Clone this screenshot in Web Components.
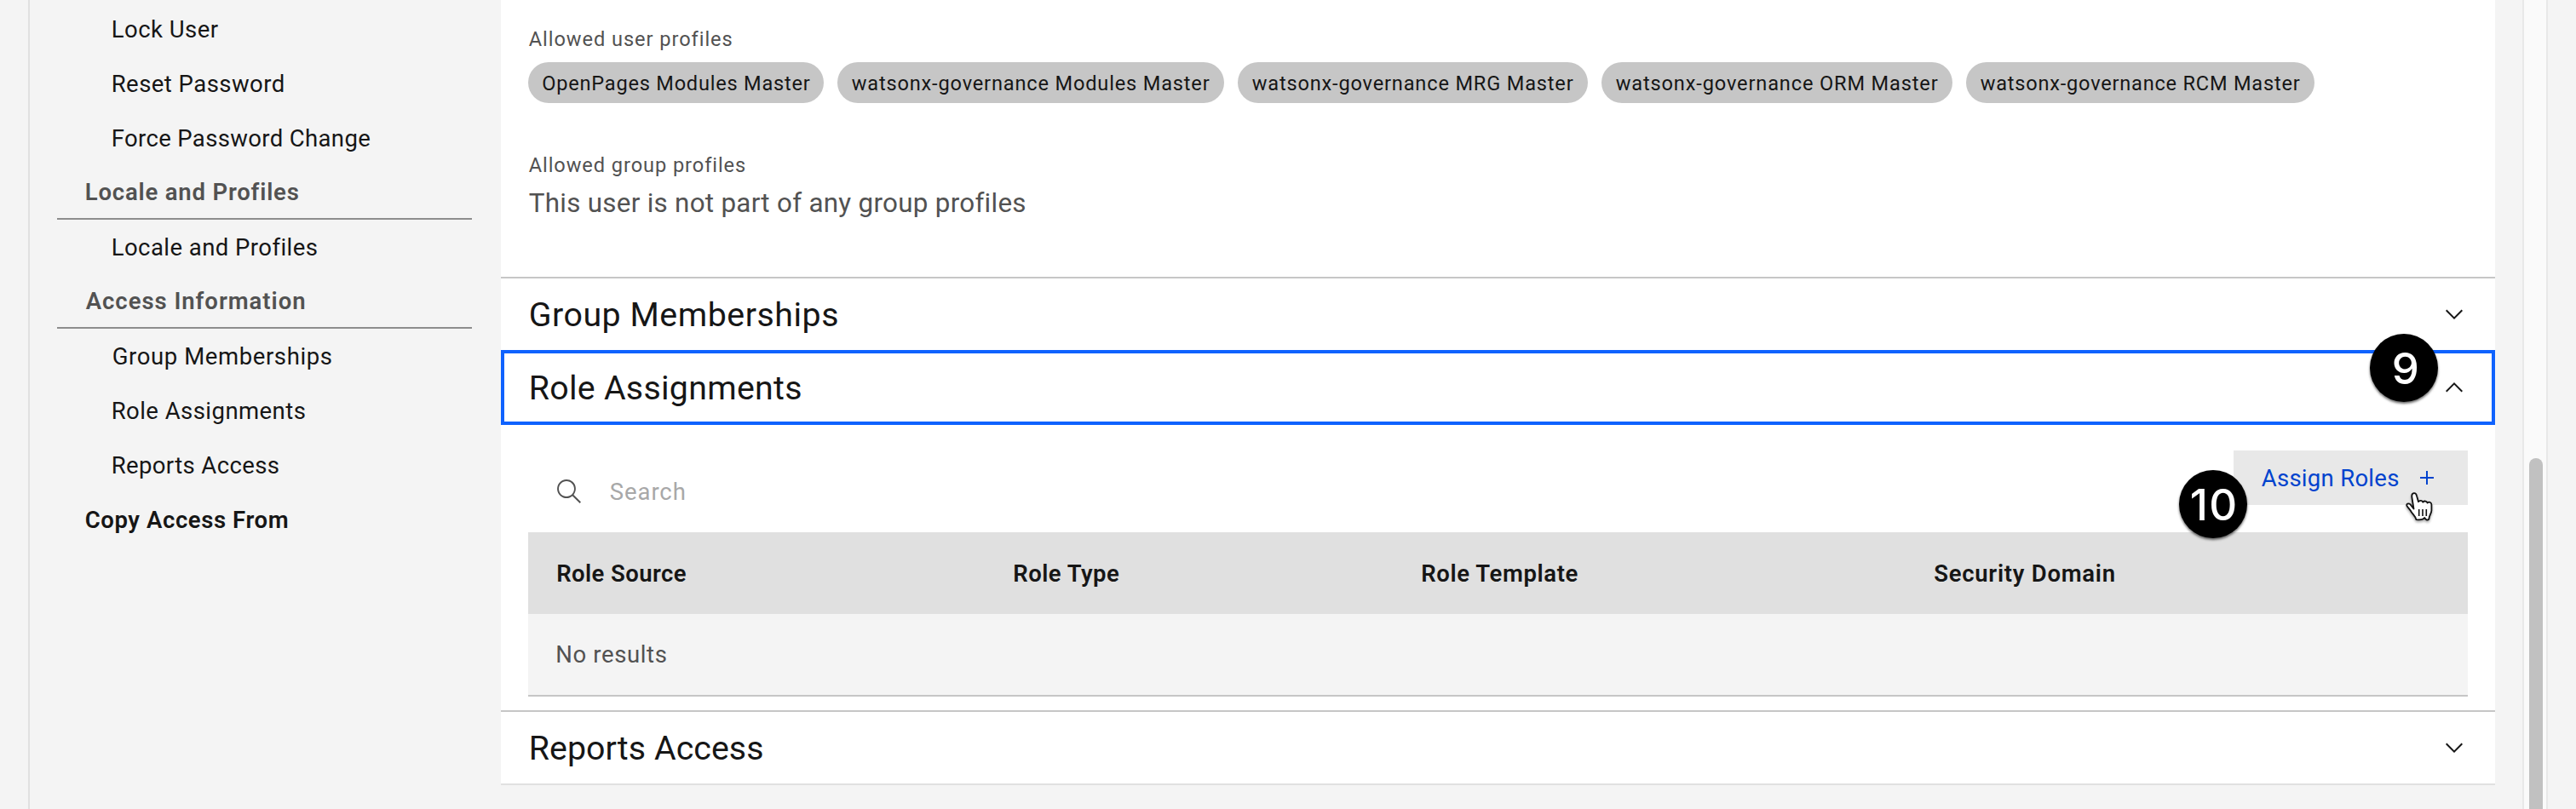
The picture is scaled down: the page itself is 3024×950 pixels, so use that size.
<!DOCTYPE html>
<html lang="en">
<head>
<meta charset="utf-8">
<title>User access</title>
<style>
html,body{margin:0;height:950px;overflow:hidden;background:#f4f4f4}
body{font-family:Roboto,"Noto Sans",sans-serif;color:#161616}
</style>
</head>
<body>
<app-shell>
  <side-nav slot="nav">
    <nav-item w="123.5">Lock User</nav-item>
    <nav-item w="200.5">Reset Password</nav-item>
    <nav-item w="302">Force Password Change</nav-item>
    <nav-heading w="250">Locale and Profiles</nav-heading>
    <nav-item w="238.5">Locale and Profiles</nav-item>
    <nav-heading w="257">Access Information</nav-heading>
    <nav-item w="256.5">Group Memberships</nav-item>
    <nav-item w="225.5">Role Assignments</nav-item>
    <nav-item w="194.5">Reports Access</nav-item>
    <nav-item strong w="237.5">Copy Access From</nav-item>
  </side-nav>
  <profile-section slot="main"></profile-section>
  <accordion-item slot="main" w="361" inset="34" label="Group Memberships"></accordion-item>
  <accordion-item slot="main" w="317" inset="35" label="Role Assignments" open>
    <step-badge slot="badge" w="26" style="right:67px;top:-19px">9</step-badge>
    <role-panel></role-panel>
  </accordion-item>
  <accordion-item slot="main" w="272" inset="35" label="Reports Access" last></accordion-item>
</app-shell>
<script>
const define = (name, html, setup) => {
  const template = document.createElement('template');
  template.innerHTML = html;
  customElements.define(name, class extends HTMLElement {
    constructor() {
      super();
      this.attachShadow({mode: 'open'}).append(template.content.cloneNode(true));
    }
    connectedCallback() { if (setup) setup(this, this.shadowRoot); }
  });
};
const passWidth = (host, root) =>
  root.querySelector('fit-text').setAttribute('w', host.getAttribute('w'));

define('app-shell', `
<style>
:host{display:grid;grid-template-columns:33px 555px 2341px 32px 30px 33px;height:950px;box-sizing:border-box}
.nav{grid-column:2;border-left:2px solid #e0e0e0}
.main{grid-column:3;height:922px;background:#fff}
scroll-track{grid-column:5}
</style>
<div class="nav"><slot name="nav"></slot></div>
<div class="main"><slot name="main"></slot></div>
<scroll-track></scroll-track>`);

define('scroll-track', `
<style>
:host{display:block;box-sizing:border-box;height:950px;padding:538px 4px 0 6px;background:#fafafa;border:solid #e8e8e8;border-width:0 2px}
div{height:440px;border-radius:8px;background:#c1c1c1}
</style><div></div>`);

define('side-nav', `<style>:host{display:block;padding:2px 34px 0 32px}</style><slot></slot>`);

define('nav-item', `
<style>
:host{display:block;height:64px;padding-left:65px;font-size:27.5px;line-height:65px}
:host([strong]){padding-left:33px;font-weight:600}
</style><fit-text><slot></slot></fit-text>`, passWidth);

define('nav-heading', `
<style>
:host{display:block;box-sizing:border-box;height:64px;padding-left:33px;border-bottom:2px solid #8d8d8d;color:#525252;font-size:27.5px;font-weight:600;line-height:64px}
</style><fit-text><slot></slot></fit-text>`, passWidth);

define('tag-chip', `
<style>
:host{display:block;box-sizing:border-box;height:48px;padding-left:16.5px;border-radius:24px;background:#c6c6c6;font-size:23.6px;line-height:50px}
</style><fit-text><slot></slot></fit-text>`, passWidth);

define('profile-section', `
<style>
:host{display:block;box-sizing:border-box;height:325px;padding:30px 32px 0;color:#525252}
.label{height:32px;font-size:23.6px;line-height:32px}
.tags{display:flex;gap:16px;margin:11px 0 57px;color:#161616}
.empty{margin-top:4px;font-size:31.4px;line-height:49px}
</style>
<div class="label"><fit-text w="238.5">Allowed user profiles</fit-text></div>
<div class="tags">
  <tag-chip w="314" style="width:346.5px">OpenPages Modules Master</tag-chip>
  <tag-chip w="420.5" style="width:454px">watsonx-governance Modules Master</tag-chip>
  <tag-chip w="377.5" style="width:411px">watsonx-governance MRG Master</tag-chip>
  <tag-chip w="378.5" style="width:412px">watsonx-governance ORM Master</tag-chip>
  <tag-chip w="375.5" style="width:409px">watsonx-governance RCM Master</tag-chip>
</div>
<div class="label"><fit-text w="254">Allowed group profiles</fit-text></div>
<div class="empty"><fit-text w="582">This user is not part of any group profiles</fit-text></div>`);

define('accordion-item', `
<style>
:host{display:block;position:relative}
.head{display:flex;box-sizing:border-box;justify-content:space-between;align-items:flex-start;height:86px;padding-right:32px;border-top:2px solid #c6c6c6;font-size:39.3px;line-height:87px}
svg{margin-top:26px;display:block}
:host([open]) .head{height:88px;border-color:transparent;outline:4px solid #0f62fe;outline-offset:-4px}
:host([open]) svg{transform:rotate(180deg)}
:host([last]) .head{height:88px;border-bottom:2px solid #e0e0e0}
::slotted([slot=badge]){position:absolute}
</style>
<div class="head"><fit-text></fit-text>
<svg width="32" height="32" viewBox="0 0 16 16" fill="#161616"><path d="M8 11L3 6 3.7 5.3 8 9.6 12.3 5.3 13 6z"/></svg></div>
<slot name="badge"></slot><slot></slot>`, (host, root) => {
  const t = root.querySelector('fit-text');
  t.textContent = host.getAttribute('label');
  t.style.marginLeft = host.getAttribute('inset') + 'px';
  passWidth(host, root);
});

define('role-panel', `
<style>
:host{display:block;box-sizing:border-box;height:335px;padding:30px 32px 0}
.bar{display:flex;justify-content:space-between;height:96px}
</style>
<div class="bar"><search-field></search-field><assign-button></assign-button></div>
<role-table></role-table>`);

define('search-field', `
<style>
:host{display:flex;padding:32px 0 0 32px;gap:32px;color:#a8a8a8;font-size:27.5px;line-height:33px}
</style>
<svg width="32" height="32" viewBox="0 0 16 16" fill="#525252"><path d="M15 14.3L10.7 10c1.9-2.3 1.6-5.8-.7-7.7S4.2.7 2.3 3 .7 8.8 3 10.7c2 1.7 5 1.7 7 0l4.3 4.3zM2 6.5C2 4 4 2 6.5 2S11 4 11 6.5 9 11 6.5 11 2 9 2 6.5z"/></svg>
<fit-text w="87.5">Search</fit-text>`);

define('assign-button', `
<style>
:host{display:flex;position:relative;box-sizing:border-box;width:275px;height:64px;padding:0 32px;align-items:center;justify-content:space-between;background:#e8e8e8;color:#0043ce;font-size:27.5px;line-height:65px}
svg.plus{display:block}
step-badge{position:absolute;left:-64px;top:23px}
hand-cursor{position:absolute;left:193px;top:41px}
</style>
<fit-text w="161">Assign Roles</fit-text>
<svg class="plus" width="32" height="32" viewBox="0 0 32 32" fill="#0043ce"><path d="M17 15V8h-2v7H8v2h7v7h2v-7h7v-2z"/></svg>
<step-badge w="52">10</step-badge>
<hand-cursor></hand-cursor>`);

define('hand-cursor', `
<style>:host{display:block;width:50px;height:50px}svg{display:block;overflow:visible;filter:drop-shadow(0 2px 1.5px rgba(0,0,0,.35))}</style>
<svg width="50" height="50" viewBox="0 0 50 50" stroke-linejoin="round" stroke-linecap="round">
<path fill="#fff" stroke="#111" stroke-width="1.8" d="M18.5 27.5L16.3 13.5C15.8 8.2 21 7.7 22 12.2L24 19.2C25.5 17.2 28.5 17.4 29.3 19.7 31 17.8 33.8 18.3 34.5 20.6 37 18.6 39.4 20.2 39.4 22.8V29.5C39.2 33.2 36.6 34.8 36.4 39.5 34.3 41.6 32.6 40.2 31.2 38 29.8 40.2 26.5 40.7 21.4 40.2 20.8 36.6 17.6 34.2 15.8 31.2 14.2 28.3 12 26.3 10.6 24.3 9.2 21.8 12.2 20.4 14.6 22.4Z"/>
<path fill="none" stroke="#111" stroke-width="1.6" stroke-linecap="butt" d="M24.7 28V36M29 28V36M33.3 28V36"/>
</svg>`);

define('step-badge', `
<style>
:host{display:flex;width:80px;height:80px;justify-content:center;border-radius:50%;background:#000;color:#fff;font:500 51px/82px Inter,Arial,sans-serif;box-shadow:0 2px 3px rgba(0,0,0,.6)}
</style><fit-text><slot></slot></fit-text>`, passWidth);

define('role-table', `
<style>
:host{display:block;border-bottom:2px solid #c6c6c6;font-size:27.5px}
.head,.row{display:grid;grid-template-columns:536px 479px 601px 1fr;padding-left:33.5px}
.head{height:96px;background:#e0e0e0;font-weight:600;line-height:97px}
.row{height:95px;background:#f4f4f4;color:#525252;line-height:95px}
</style>
<div class="head"><fit-text w="152">Role Source</fit-text><fit-text w="125">Role Type</fit-text><fit-text w="184.5">Role Template</fit-text><fit-text w="212">Security Domain</fit-text></div>
<div class="row"><fit-text w="128">No results</fit-text></div>`);

/* Sets its text so that the ink starts at the box's left edge and spans the width in "w". */
define('fit-text', `
<style>
:host{display:inline-block;white-space:nowrap;font-variant-ligatures:none}
span{display:block}
</style><span><slot></slot></span>`, (host, root) => {
  const w = parseFloat(host.getAttribute('w'));
  const slot = host.querySelector('slot');
  const text = (slot ? slot.assignedNodes().map(n => n.textContent).join('') : host.textContent).trim();
  const cs = getComputedStyle(host);
  const ctx = document.createElement('canvas').getContext('2d');
  ctx.font = cs.fontWeight + ' ' + cs.fontSize + ' ' + cs.fontFamily;
  const m = ctx.measureText(text);
  const ink = m.actualBoundingBoxLeft + m.actualBoundingBoxRight;
  if (text.length > 1) host.style.letterSpacing = (w - ink - 0.5) / (text.length - 1) + 'px';
  root.querySelector('span').style.marginLeft = m.actualBoundingBoxLeft + 0.7 + 'px';
  host.style.width = w + 'px';
});
</script>
</body>
</html>
